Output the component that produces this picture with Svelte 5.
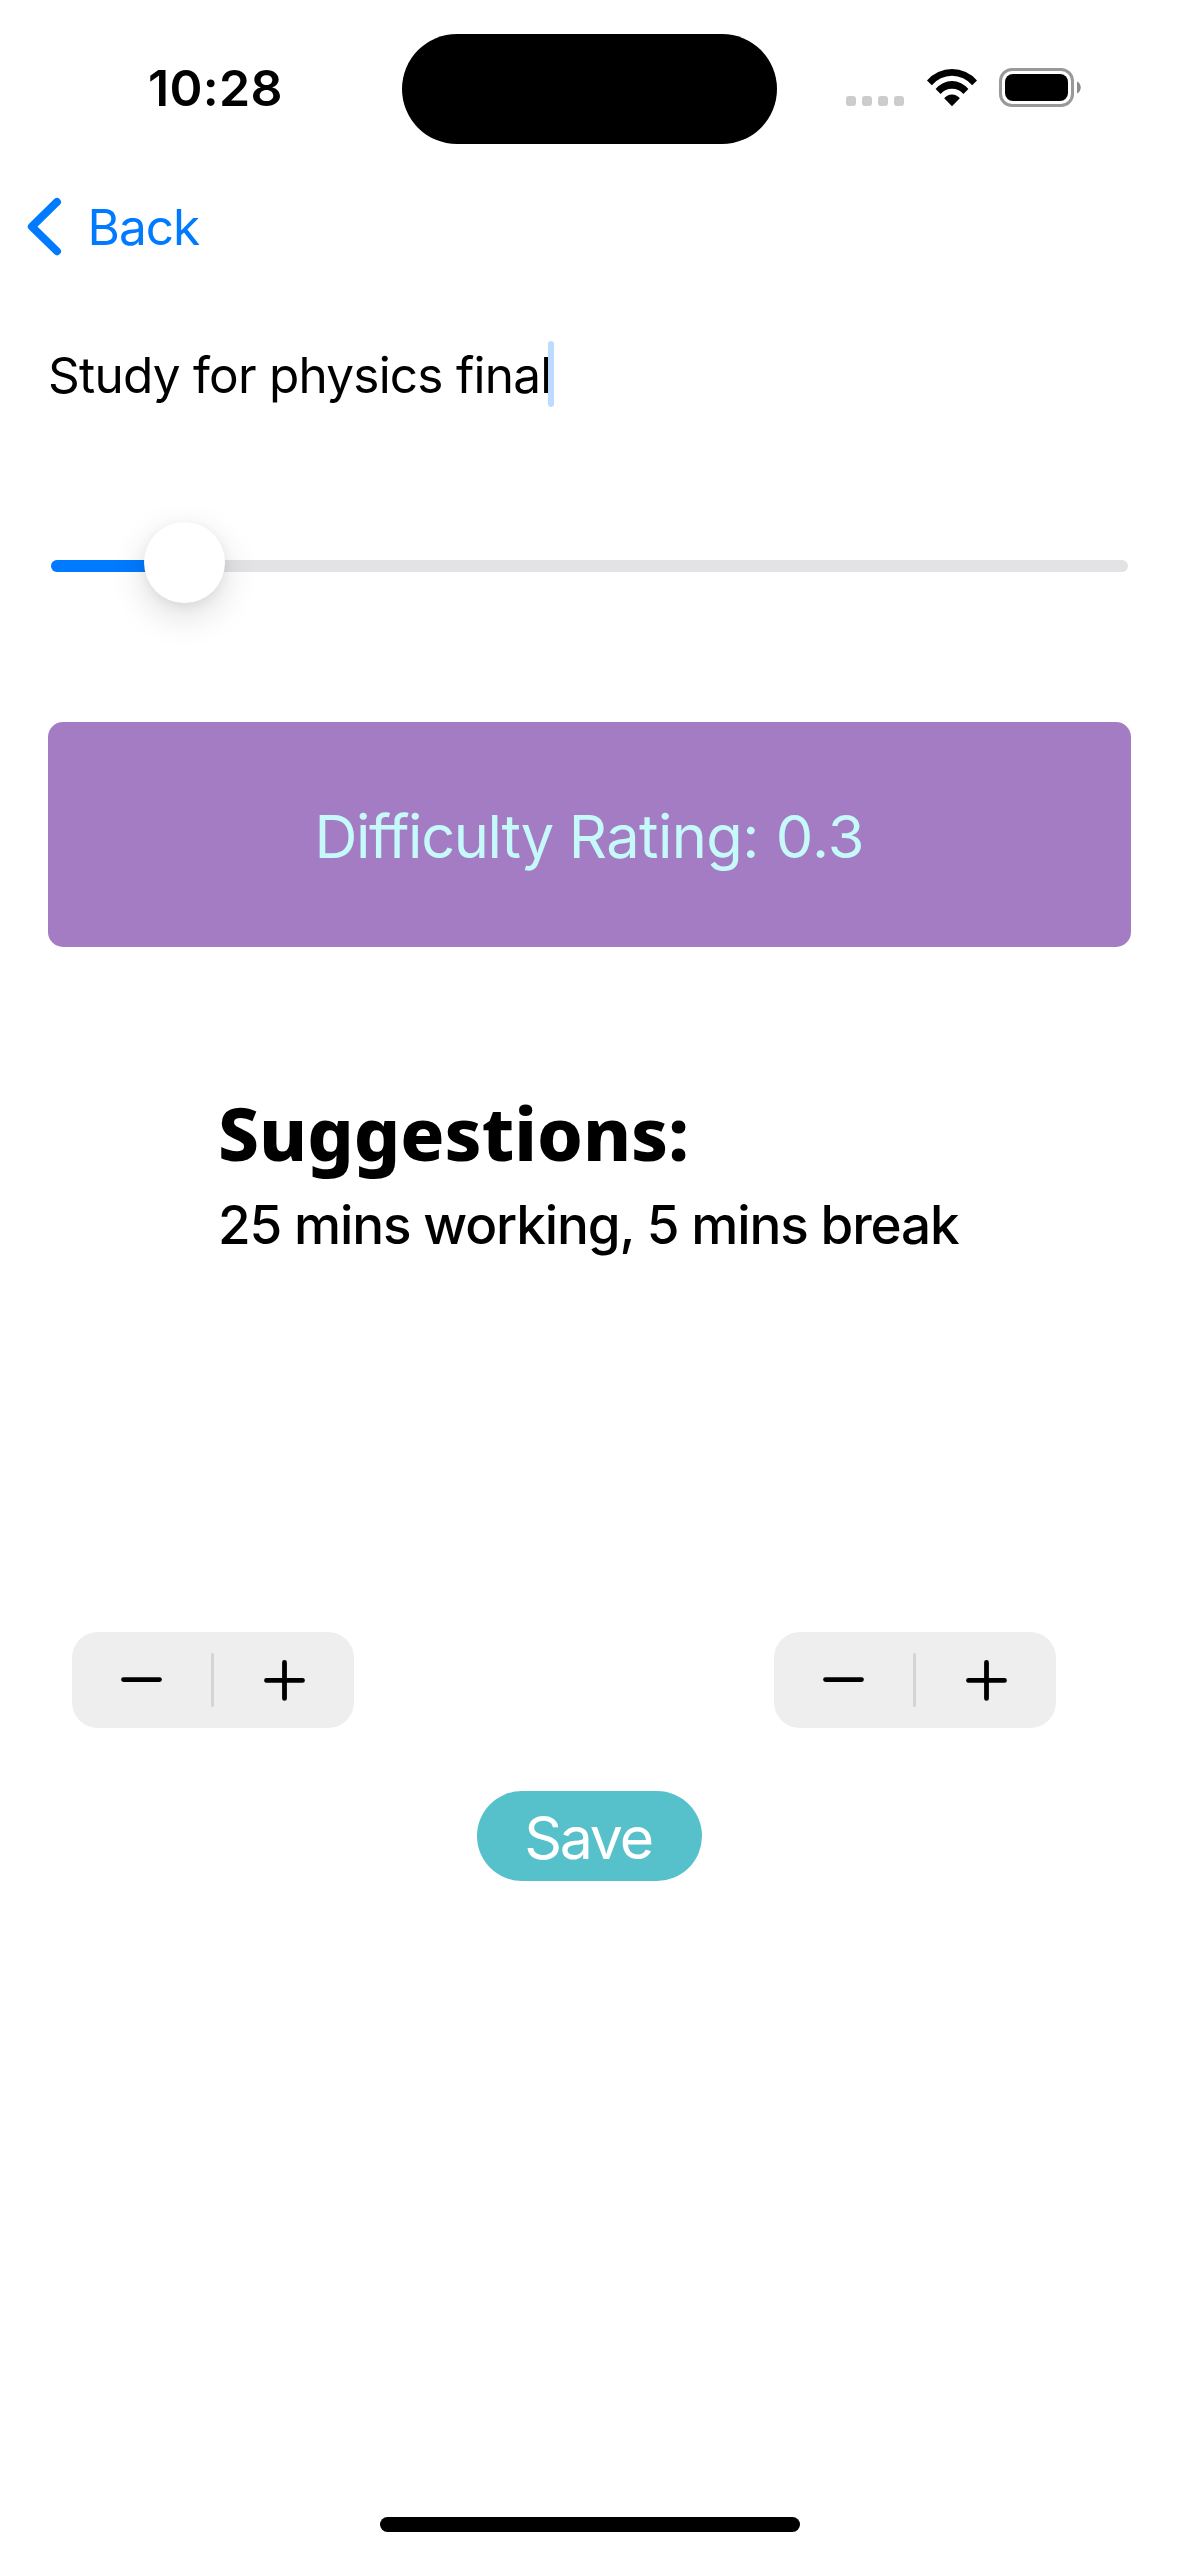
<script>
  let task = $state('Study for physics final');
  let rating = $state(0.3);
  const fill = 12.4;
  const signalDots = [0, 1, 2, 3];
  const steppers = ['Working minutes', 'Break minutes'];
</script>

<div class="screen">
  <header class="status">
    <time>10:28</time>
    <div class="island"></div>
    <div class="indicators">
      <div class="signal">
        {#each signalDots as dot (dot)}<i></i>{/each}
      </div>
      <svg class="wifi" width="52" height="38" viewBox="0 0 52 38" aria-hidden="true">
        <path d="M1 11.5A33 33 0 0 1 51 11.5L46.2 16.3A26 26 0 0 0 5.8 16.3Z" />
        <path d="M9.6 20A21 21 0 0 1 42.4 20L37.4 25A15 15 0 0 0 14.6 25Z" />
        <path d="M18.2 29.2A10 10 0 0 1 33.8 29.2L26 37.2Z" />
      </svg>
      <svg class="battery" width="82" height="39" viewBox="0 0 82 39" aria-hidden="true">
        <rect x="1.5" y="1.5" width="72" height="36" rx="11.5" fill="none" stroke="#999" stroke-width="3" />
        <rect x="6" y="6" width="63" height="27" rx="8" />
        <path d="M78 13.5C83 15.5 83 23.5 78 25.5Z" fill="#8c8c8c" />
      </svg>
    </div>
  </header>

  <nav>
    <svg width="36" height="60" viewBox="0 0 36 60" aria-hidden="true">
      <path d="M30 5.3 4.8 30 30 54.7" transform="translate(0 -.4)" />
    </svg>
    <span>Back</span>
  </nav>

  <main>
    <div class="field"><span>{task}</span><i class="caret"></i></div>

    <div class="slider">
      <div class="track">
        <div class="filled" style="width: {fill}%"></div>
        <div class="thumb" style="left: {fill}%"></div>
      </div>
    </div>

    <div class="card"><span class="tight">Difficulty</span> <span class="normal">Rating:</span> <span class="value">{rating}</span></div>

    <section>
      <h1>Suggestions:</h1>
      <p>25 mins working, 5 mins break</p>
    </section>

    <div class="steppers">
      {#each steppers as label (label)}
        <div class="stepper" role="group" aria-label={label}>
          <svg width="282" height="96" viewBox="0 0 282 96" aria-hidden="true">
            <path class="divider" d="M140.5 22.5V73.5" />
            <path d="M51.5 47.6H87.5M194.5 48.4H230.5M212.5 30.4V66.4" />
          </svg>
        </div>
      {/each}
    </div>

    <button>Save</button>
  </main>

  <div class="home"></div>
</div>

<style>
  :global(body) {
    background: #fff;
  }
  .screen {
    display: flex;
    flex-direction: column;
    box-sizing: border-box;
    width: 1179px;
    height: 2556px;
    overflow: hidden;
    background: #fff;
    color: #000;
    font-family: Inter, "Liberation Sans", sans-serif;
  }
  .status {
    display: grid;
    grid-template-columns: 402px 375px 1fr;
    height: 160px;
    flex: none;
  }
  time {
    padding: 58px 0 0 148px;
    font-size: 50px;
    font-weight: 600;
    line-height: 60px;
    letter-spacing: 0.3px;
  }
  .island {
    height: 110px;
    margin-top: 34px;
    border-radius: 55px;
    background: #000;
  }
  .indicators {
    display: flex;
    align-items: flex-start;
    padding: 68px 0 0 69px;
  }
  .signal {
    display: flex;
    gap: 6px;
    padding-top: 28px;
  }
  .signal i {
    width: 10px;
    height: 10px;
    border-radius: 3px;
    background: #ccc;
  }
  .wifi {
    margin: 1px 0 0 21.5px;
  }
  .battery {
    margin-left: 21.5px;
  }
  nav {
    display: flex;
    align-items: center;
    gap: 24.5px;
    height: 134px;
    padding-left: 27px;
    flex: none;
    color: #007aff;
    font-size: 49.5px;
    letter-spacing: -1px;
  }
  nav path {
    fill: none;
    stroke: #007aff;
    stroke-width: 7.9;
    stroke-linecap: round;
    stroke-linejoin: round;
  }
  main {
    display: flex;
    flex-direction: column;
    padding: 0 48px;
  }
  .field {
    display: flex;
    align-items: center;
    height: 162px;
    font-size: 49.5px;
    letter-spacing: -0.77px;
    white-space: nowrap;
  }
  .field span {
    width: 500px;
  }
  .caret {
    width: 6px;
    height: 66px;
    margin-top: -2px;
    border-radius: 3px;
    background: #bbdcff;
  }
  .slider {
    display: flex;
    align-items: center;
    height: 220px;
    padding: 0 3px;
  }
  .track {
    position: relative;
    width: 100%;
    height: 12px;
    border-radius: 6px;
    background: #e3e3e5;
  }
  .filled {
    height: 12px;
    border-radius: 6px 0 0 6px;
    background: #007aff;
  }
  .thumb {
    position: absolute;
    top: -38px;
    width: 81px;
    height: 81px;
    margin-left: -40.5px;
    border-radius: 50%;
    background: #fff;
    box-shadow: 0 12px 36px rgba(0, 0, 0, 0.14), 0 3px 12px rgba(0, 0, 0, 0.06);
  }
  .card {
    box-sizing: border-box;
    height: 225px;
    margin-top: 46px;
    padding-top: 4px;
    border-radius: 15px;
    background: #a47cc3;
    color: #c5f9fa;
    font-size: 59.5px;
    line-height: 221px;
    letter-spacing: -0.8px;
    text-align: center;
  }
  .tight {
    letter-spacing: -1.35px;
  }
  .normal {
    letter-spacing: -0.6px;
  }
  .value {
    margin-left: 1px;
    letter-spacing: 0.2px;
  }
  section {
    padding: 141px 0 0 170px;
  }
  h1 {
    margin: 0;
    font: 800 73px/90px "Noto Sans", sans-serif;
  }
  p {
    margin: 0;
    font-size: 53px;
    font-weight: 450;
    line-height: 95px;
    letter-spacing: -1.15px;
    white-space: nowrap;
  }
  .steppers {
    display: flex;
    gap: 420px;
    margin-top: 359px;
    padding-left: 24px;
  }
  .stepper {
    width: 282px;
    height: 96px;
    border-radius: 26px;
    background: #eee;
  }
  .stepper svg {
    display: block;
  }
  .stepper path {
    fill: none;
    stroke: #000;
    stroke-width: 4.8;
    stroke-linecap: round;
  }
  .stepper .divider {
    stroke: #d4d4d4;
    stroke-width: 3;
  }
  button {
    align-self: center;
    box-sizing: border-box;
    width: 225px;
    height: 90px;
    margin-top: 63px;
    padding: 3px 3px 0 0;
    border: 0;
    border-radius: 45px;
    background: #56c1ca;
    color: #fff;
    font: 400 59px/87px Inter, sans-serif;
    letter-spacing: -2.2px;
  }
  .home {
    flex: none;
    width: 420px;
    height: 15px;
    margin: auto auto 24px 380px;
    border-radius: 8px;
    background: #000;
  }
</style>
